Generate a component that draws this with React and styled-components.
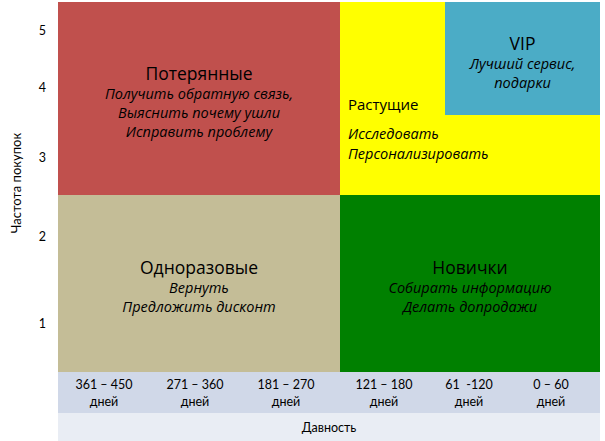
import React from 'react'
import styled, { createGlobalStyle } from 'styled-components'

const GlobalStyle = createGlobalStyle`
  html, body {
    margin: 0;
    padding: 0;
    background: #ffffff;
  }
  body {
    font-family: Lato, "Open Sans", sans-serif;
    color: #000;
  }
`

const Page = styled.div`
  width: 605px;
  height: 441px;
  display: grid;
  grid-template-columns: 58px 542px;
  grid-template-rows: 370px 41px 28px;
  padding-top: 2px;
  box-sizing: border-box;
`

const YAxis = styled.div`
  position: relative;
  grid-row: 1 / 2;
`

const YTitle = styled.div`
  position: absolute;
  left: 16px;
  top: 181px;
  width: max-content;
  transform: translate(-50%, -50%) rotate(-90deg);
  white-space: nowrap;
  font-size: 13px;
`

const Tick = styled.span`
  position: absolute;
  right: 12px;
  top: ${(p) => p.$y - 2}px;
  transform: translateY(-50%);
  font-size: 12.5px;
`

const Chart = styled.div`
  display: grid;
  grid-template-columns: 282px 260px;
  grid-template-rows: 193px 177px;
  font-family: "Open Sans", Lato, sans-serif;
`

const Quadrant = styled.div`
  background: ${(p) => p.$bg};
  display: flex;
  flex-direction: column;
  align-items: center;
  justify-content: center;
  text-align: center;
  padding-top: ${(p) => p.$pt || 0}px;
  box-sizing: border-box;
`

const Title = styled.div`
  font-size: 17.5px;
  line-height: 21px;
`

const Line = styled.div`
  font-style: italic;
  font-size: 14.5px;
  line-height: 19px;
`

const Growing = styled.div`
  background: #ffff00;
  display: grid;
  grid-template-columns: 105px 155px;
  grid-template-rows: 113px auto;
`

const GrowTitle = styled.div`
  align-self: end;
  padding: 0 0 1px 8px;
  font-size: 15px;
  line-height: 20px;
`

const Vip = styled.div`
  background: #4bacc6;
  display: flex;
  flex-direction: column;
  align-items: center;
  justify-content: center;
  text-align: center;
  padding-top: 7px;
  box-sizing: border-box;
`

const GrowLines = styled.div`
  grid-column: 1 / 3;
  padding: 9px 0 0 8px;
  & > div {
    line-height: 20px;
  }
`

const XBand = styled.div`
  grid-column: 2 / 3;
  background: #d0d8e8;
  display: grid;
  grid-template-columns: 92px 90px 92px 104px 66px 98px;
  align-items: center;
`

const XLabel = styled.div`
  text-align: center;
  font-size: 12.5px;
  line-height: 17px;
  padding-top: 1px;
  white-space: pre;
`

const XTitle = styled.div`
  grid-column: 2 / 3;
  background: #e9edf4;
  display: flex;
  align-items: center;
  justify-content: center;
  font-size: 12.5px;
  padding-top: 1px;
`

const ticks = [
  { v: 5, y: 30 },
  { v: 4, y: 87 },
  { v: 3, y: 157 },
  { v: 2, y: 236 },
  { v: 1, y: 323 },
]

const ranges = ['361 – 450', '271 – 360', '181 – 270', '121 – 180', '61  -120', '0 – 60']

export default function App() {
  return (
    <>
      <GlobalStyle />
      <Page>
        <YAxis>
          <YTitle>Частота покупок</YTitle>
          {ticks.map((t) => (
            <Tick key={t.v} $y={t.y}>
              {t.v}
            </Tick>
          ))}
        </YAxis>
        <Chart>
          <Quadrant $bg="#c0504d" $pt={6}>
            <Title>Потерянные</Title>
            <Line>Получить обратную связь,</Line>
            <Line>Выяснить почему ушли</Line>
            <Line>Исправить проблему</Line>
          </Quadrant>
          <Growing>
            <GrowTitle>Растущие</GrowTitle>
            <Vip>
              <Title>VIP</Title>
              <Line>Лучший сервис,</Line>
              <Line>подарки</Line>
            </Vip>
            <GrowLines>
              <Line>Исследовать</Line>
              <Line>Персонализировать</Line>
            </GrowLines>
          </Growing>
          <Quadrant $bg="#c4bd97" $pt={6}>
            <Title>Одноразовые</Title>
            <Line>Вернуть</Line>
            <Line>Предложить дисконт</Line>
          </Quadrant>
          <Quadrant $bg="#008000" $pt={6}>
            <Title>Новички</Title>
            <Line>Собирать информацию</Line>
            <Line>Делать допродажи</Line>
          </Quadrant>
        </Chart>
        <XBand>
          {ranges.map((r) => (
            <XLabel key={r}>
              {r}
              {'\n'}дней
            </XLabel>
          ))}
        </XBand>
        <XTitle>Давность</XTitle>
      </Page>
    </>
  )
}
